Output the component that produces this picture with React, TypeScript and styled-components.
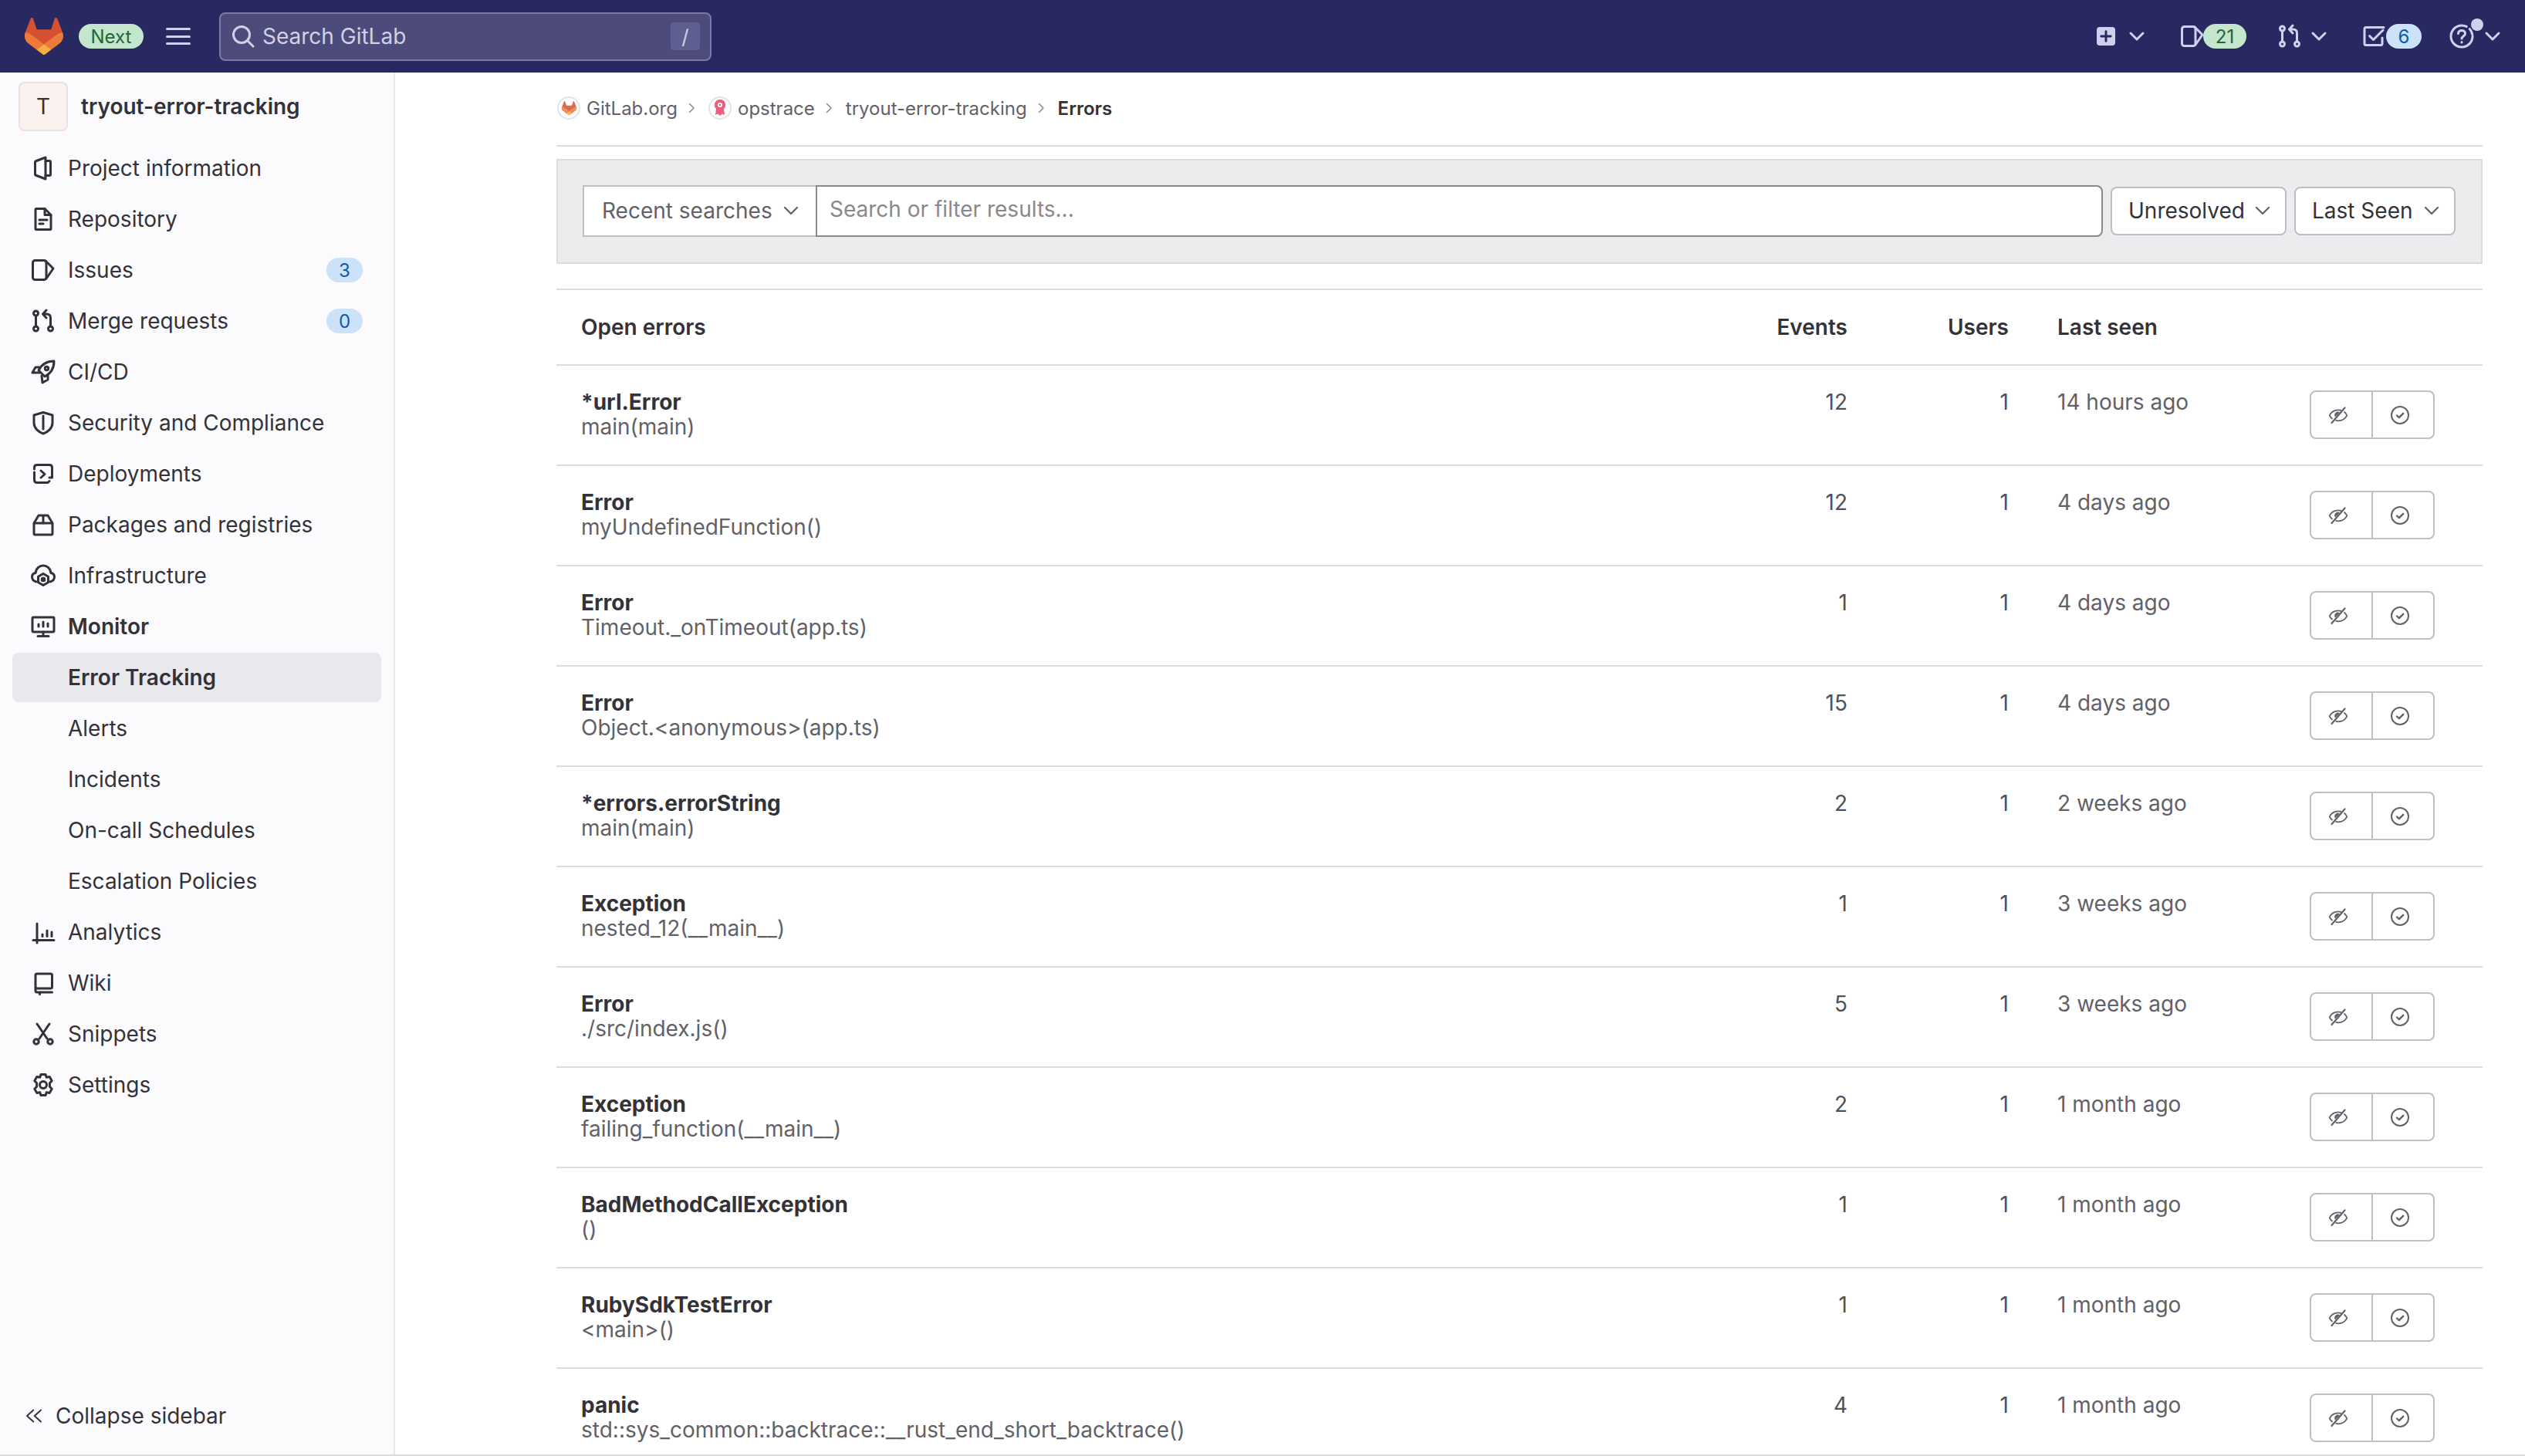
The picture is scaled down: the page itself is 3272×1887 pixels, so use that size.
import React from "react";
import styled, { createGlobalStyle } from "styled-components";

const GlobalStyle = createGlobalStyle`
  html, body {
    margin: 0;
    padding: 0;
    background: #fff;
    font-family: Inter, "Noto Sans", sans-serif;
    color: #333238;
  }
  * { box-sizing: border-box; }
`;

const Glyph = styled.svg.attrs({ viewBox: "0 0 16 16", fill: "none" })<{ $size?: number; $weight?: number }>`
  width: ${({ $size }) => $size ?? 32}px;
  height: ${({ $size }) => $size ?? 32}px;
  flex: none;
  stroke: currentColor;
  stroke-width: ${({ $weight }) => $weight ?? 1.5};
  stroke-linecap: round;
  stroke-linejoin: round;
`;

const icons: Record<string, React.ReactNode> = {
  project: (
    <>
      <path d="M9.5 1 3 3.5q-.25.1-.25.5v8q0 .4.25.5L9.5 15z" />
      <path d="M9.5 3.25H12q.75 0 .75.75v8q0 .75-.75.75H9.5" />
    </>
  ),
  doc: (
    <>
      <path d="M3.5 1.25H9l4 4v9q0 .5-.5.5h-9q-.5 0-.5-.5V1.75q0-.5.5-.5z" />
      <path d="M9 1.25v4h4M5.5 8.5h5M5.5 11H8" />
    </>
  ),
  issues: (
    <>
      <rect x="1.25" y="1.75" width="8.75" height="12.5" rx="1.5" />
      <path d="M9.5 2 14.5 7 10 13.5" />
    </>
  ),
  merge: (
    <>
      <circle cx="3.25" cy="3" r="1.5" />
      <circle cx="3.25" cy="13" r="1.5" />
      <circle cx="12.75" cy="13" r="1.5" />
      <path d="M3.25 4.5v7M12.75 11.5V6q0-2.5-2.5-2.5H8.5M10 1 7.75 3.5 10 6" />
    </>
  ),
  rocket: (
    <>
      <path d="M15 1c-4.5 0-8 2-10 6l4 4c4-2 6-5.500 6-10z" />
      <circle cx="10.25" cy="5.750" r="1.100" />
      <path d="M5.500 5H3L1 8.500h4.500M11 10.500V13l-3.500 2-.5-4.500" />
    </>
  ),
  shield: <path d="M8 1.250 14 3v5c0 3.500-3 6-6 7-3-1-6-3.500-6-7V3zM8 3.500v8.500" />,
  deploy: (
    <>
      <path d="M2.250 5V4q0-1.750 1.750-1.750h8Q13.750 2.250 13.750 4v6.500H12" />
      <path d="M2.250 7v5q0 1.750 1.750 1.750h7l1-1" />
      <path d="M6.500 6 9 8.250 6.500 10.500" />
    </>
  ),
  box: (
    <>
      <rect x="2" y="7" width="12" height="7.500" rx=".75" />
      <path d="M2 7 5 2h6l3 5M8 2v5" />
    </>
  ),
  infra: (
    <>
      <path d="M3.500 12C1.500 11.500.750 10 .750 8.750c0-1.250 1-2.250 2.250-2.500C3.250 3.500 5.500 1.500 8 1.500s4.750 2 5 4.750c1.250.250 2.250 1.250 2.250 2.500 0 1.250-.750 2.750-2.750 3.250" />
      <path d="m8 6.750 3.250 1.900v3.700L8 14.250l-3.250-1.900v-3.700z" />
      <circle cx="8" cy="10.500" r=".9" />
    </>
  ),
  monitor: (
    <>
      <rect x="1" y="2" width="14" height="9.500" rx=".75" />
      <path d="M5 8V6.500M8 8V5M11 8V6M8 11.500v2.500M4.500 14.250h7" />
    </>
  ),
  chart: <path d="M1.500 13.250h13.500M4 2.500V15M7.500 9.500v1.250M10.500 7v3.750M13.500 8v2.750" />,
  book: (
    <>
      <rect x="3" y="2" width="10.750" height="9.500" rx="1" />
      <path d="M3 11v2q0 1 1 1h9.750M5.750 14v1.250" />
    </>
  ),
  scissors: (
    <>
      <path d="M4 1.500 10.500 11M12 1.500 5.500 11" />
      <circle cx="3.500" cy="13" r="1.600" />
      <circle cx="12.500" cy="13" r="1.600" />
    </>
  ),
  gear: (
    <>
      <path d="M6.500 1.250h3l.6 1.900 2-.4 1.500 2.600-1.400 1.500v2.300l1.400 1.500-1.500 2.600-2-.4-.6 1.900h-3l-.6-1.900-2 .4-1.500-2.600 1.400-1.500V6.850L2.400 5.350l1.500-2.600 2 .4z" />
      <circle cx="8" cy="8" r="2.250" />
    </>
  ),
  search: <path d="M11 11l3.500 3.500M7 12.250A5.250 5.250 0 1 0 7 1.750a5.250 5.250 0 0 0 0 10.500z" />,
  todo: (
    <>
      <path d="M14 2.250H2.500q-1 0-1 1v9.500q0 1 1 1h9.500q1 0 1-1V9" />
      <path d="M4.750 7.750 7.250 10.250 13.500 4" />
    </>
  ),
  help: (
    <>
      <circle cx="8" cy="8" r="7" strokeDasharray="36 2.500 4 2" />
      <path d="M5.750 6.250C5.750 3.500 10.250 3.500 10.250 6.250c0 1.750-2.250 1.750-2.250 3.250M8 11.750v.25" />
    </>
  ),
};

const Tanuki = ({ width, muted }: { width: number; muted?: boolean }) => (
  <svg width={width} viewBox="0 0 25 24" style={{ opacity: muted ? 0.85 : 1, flex: "none" }}>
    <path d="m24.507 9.500-.034-.09L21.082.562a.896.896 0 0 0-1.694.091l-2.290 7.010H7.825L5.535.653a.898.898 0 0 0-1.694-.090L.451 9.411.416 9.500a6.297 6.297 0 0 0 2.090 7.278l.012.01.030.022 5.160 3.867 2.560 1.935 1.554 1.176a1.051 1.051 0 0 0 1.268 0l1.555-1.176 2.560-1.935 5.197-3.890.014-.01A6.297 6.297 0 0 0 24.507 9.500Z" fill="#D65032" />
    <path d="m24.507 9.500-.034-.09a11.440 11.440 0 0 0-4.560 2.051l-7.447 5.632 4.742 3.584 5.197-3.890.014-.01A6.297 6.297 0 0 0 24.507 9.500Z" fill="#EE7A3A" />
    <path d="m7.707 20.677 2.560 1.935 1.555 1.176a1.051 1.051 0 0 0 1.268 0l1.555-1.176 2.560-1.935-4.743-3.584-4.755 3.584Z" fill="#F2AE45" />
    <path d="M5.010 11.461a11.430 11.430 0 0 0-4.560-2.050L.416 9.500a6.297 6.297 0 0 0 2.090 7.278l.012.01.030.022 5.160 3.867 4.745-3.584-7.444-5.632Z" fill="#EE7A3A" />
  </svg>
);

const Page = styled.div`
  width: 3272px;
  height: 1887px;
  overflow: hidden;
  display: flex;
  flex-direction: column;
  border-bottom: 2px solid #dcdcde;
`;

/* top bar */
const TopBar = styled.header`
  height: 94px;
  flex: none;
  display: flex;
  align-items: center;
  background: #292961;
  color: #d1d0ee;
  padding: 0 26px 0 32px;
`;

const NextBadge = styled.span`
  margin-left: 20px;
  width: 84px;
  height: 32px;
  border-radius: 16px;
  background: #c3e6cd;
  color: #24663b;
  font-size: 24px;
  display: flex;
  align-items: center;
  justify-content: center;
`;

const Burger = styled.span`
  margin-left: 29px;
  width: 32px;
  height: 22px;
  display: flex;
  flex-direction: column;
  justify-content: space-between;

  i {
    display: block;
    height: 3px;
    border-radius: 2px;
    background: #d1d0ee;
  }
`;

const SearchBox = styled.div`
  margin-left: 37px;
  width: 638px;
  height: 63px;
  border: 2px solid #7b7aa6;
  border-radius: 8px;
  background: #4c4b7b;
  display: flex;
  align-items: center;
  padding: 0 13px;
  color: #d1d0e6;
  font-size: 28px;
  gap: 9px;
`;

const SearchLabel = styled.span`
  flex: 1;
`;

const SlashKey = styled.span`
  width: 38px;
  height: 36px;
  border-radius: 4px;
  background: #5f5e90;
  display: flex;
  align-items: center;
  justify-content: center;
  font-size: 26px;
`;

const TopActions = styled.div`
  margin-left: auto;
  display: flex;
  align-items: center;
`;

const TopItem = styled.div<{ $gap: number }>`
  position: relative;
  margin-left: ${({ $gap }) => $gap}px;
  display: flex;
  align-items: center;
`;

const Caret = styled.span<{ $gap: number }>`
  margin-left: ${({ $gap }) => $gap}px;
  display: flex;
`;

const PlusTile = styled.span`
  width: 24px;
  height: 24px;
  margin: 0 4px;
  border-radius: 4px;
  background: #d1d0ee;
  color: #292961;
  display: flex;
  align-items: center;
  justify-content: center;
`;

const CountPill = styled.span<{ $tone: "green" | "blue"; $width: number; $overlap: number }>`
  width: ${({ $width }) => $width}px;
  height: 32px;
  margin-left: -${({ $overlap }) => $overlap}px;
  position: relative;
  border-radius: 16px;
  font-size: 24px;
  display: flex;
  align-items: center;
  justify-content: center;
  background: ${({ $tone }) => ($tone === "green" ? "#c3e6cd" : "#cbe2f9")};
  color: ${({ $tone }) => ($tone === "green" ? "#24663b" : "#0b5cad")};
`;

const HelpDot = styled.span`
  position: absolute;
  left: 28px;
  top: -7px;
  width: 16px;
  height: 16px;
  border-radius: 50%;
  background: #d1d0ee;
`;

/* layout */
const Body = styled.div`
  flex: 1;
  min-height: 0;
  display: flex;
`;

const Sidebar = styled.aside`
  width: 512px;
  flex: none;
  display: flex;
  flex-direction: column;
  background: #fbfafd;
  border-right: 2px solid #e9e9ec;
  padding: 12px 16px 0;
`;

const ProjectRow = styled.div`
  display: flex;
  align-items: center;
  gap: 17px;
  padding-left: 8px;
  height: 64px;
  font-size: 28px;
  font-weight: 600;
`;

const ProjectTile = styled.span`
  width: 64px;
  height: 64px;
  border: 2px solid #e8e2e0;
  border-radius: 8px;
  background: #fbf2ef;
  font-weight: 400;
  display: flex;
  align-items: center;
  justify-content: center;
`;

const NavList = styled.nav`
  flex: 1;
  display: flex;
  flex-direction: column;
  gap: 2px;
  padding-top: 16px;
  width: 478px;
`;

const NavRow = styled.div<{ $active?: boolean; $strong?: boolean }>`
  height: 64px;
  display: flex;
  align-items: center;
  gap: 16px;
  padding: 0 24px;
  border-radius: 8px;
  font-size: 28px;
  font-weight: ${({ $strong }) => ($strong ? 600 : 400)};
  background: ${({ $active }) => ($active ? "#e9e9ed" : "transparent")};
`;

const NavSpacer = styled.span`
  width: 32px;
  flex: none;
`;

const NavCount = styled.span`
  margin-left: auto;
  width: 47px;
  height: 32px;
  border-radius: 16px;
  background: #cbe2f9;
  color: #0b5cad;
  font-size: 24px;
  display: flex;
  align-items: center;
  justify-content: center;
`;

const Collapse = styled.div`
  height: 96px;
  padding: 0 0 4px 16px;
  display: flex;
  align-items: center;
  gap: 16px;
  font-size: 28px;
`;

const Main = styled.main`
  flex: 1;
  min-width: 0;
  padding: 0 55px 0 209px;
`;

const Crumbs = styled.div`
  height: 96px;
  border-bottom: 2px solid #dcdcde;
  display: flex;
  align-items: center;
  font-size: 24px;
  color: #626168;
  padding: 0 0 2px 1px;
`;

const CrumbAvatar = styled.span`
  width: 30px;
  height: 30px;
  margin-right: 8px;
  border: 2px solid #e3e3e6;
  border-radius: 50%;
  background: #fff;
  display: flex;
  align-items: center;
  justify-content: center;
`;

const CrumbSep = styled.span`
  margin: 0 14px 0 10px;
  color: #89888d;
  display: flex;
`;

const CrumbCurrent = styled.span`
  font-weight: 600;
  color: #333238;
`;

const FilterPanel = styled.section`
  margin-top: 16px;
  height: 136px;
  display: flex;
  align-items: center;
  gap: 10px;
  padding: 0 33px 2px 32px;
  background: #ececef;
  border: 2px solid #dcdcde;
`;

const InputGroup = styled.div`
  flex: 1;
  height: 67px;
  display: flex;
`;

const RecentButton = styled.div`
  width: 304px;
  flex: none;
  display: flex;
  align-items: center;
  justify-content: space-between;
  padding: 0 16px 0 23px;
  background: #fff;
  border: 2px solid #bfbfc3;
  font-size: 28px;
  color: #626168;

  svg {
    color: #626168;
  }
`;

const FilterInput = styled.div`
  flex: 1;
  display: flex;
  align-items: center;
  padding: 0 0 4px 16px;
  margin-left: -2px;
  background: #fff;
  border: 2px solid #89888d;
  border-radius: 0 8px 8px 0;
  font-size: 28px;
  color: #89888d;
`;

const SelectButton = styled.div<{ $width: number }>`
  width: ${({ $width }) => $width}px;
  height: 63px;
  flex: none;
  display: flex;
  align-items: center;
  justify-content: space-between;
  padding: 0 13px 0 21px;
  background: #fff;
  border: 2px solid #bfbfc3;
  border-radius: 8px;
  font-size: 28px;

  svg {
    color: #626168;
  }
`;

const Table = styled.section`
  margin-top: 32px;
  border-top: 2px solid #dcdcde;
`;

const Row = styled.div<{ $head?: boolean }>`
  height: ${({ $head }) => ($head ? 98 : 130)}px;
  display: grid;
  grid-template-columns: 1fr 300px 209px 390px 162px;
  align-items: ${({ $head }) => ($head ? "center" : "start")};
  padding: ${({ $head }) => ($head ? "0 62px 0 32px" : "32px 62px 0 32px")};
  border-bottom: 2px solid #dcdcde;
  font-size: 28px;
  font-weight: ${({ $head }) => ($head ? 600 : 400)};
  line-height: 31px;
`;

const ErrorName = styled.div`
  font-weight: 700;
`;

const ErrorPlace = styled.div`
  color: #626168;
  line-height: 32px;
`;

const Figure = styled.span<{ $plain?: boolean }>`
  text-align: right;
  color: ${({ $plain }) => ($plain ? "#333238" : "#535158")};
`;

const Seen = styled.span<{ $plain?: boolean }>`
  padding-left: 63px;
  color: ${({ $plain }) => ($plain ? "#333238" : "#626168")};
`;

const Actions = styled.div`
  height: 63px;
  display: flex;
  border: 2px solid #bfbfc3;
  border-radius: 8px;
`;

const ActionButton = styled.span`
  flex: 1;
  display: flex;
  align-items: center;
  justify-content: center;
  padding-right: 9px;
  color: #626168;

  & + & {
    border-left: 2px solid #bfbfc3;
  }
`;

const Chevron = ({ weight }: { weight?: number }) => (
  <Glyph $weight={weight}>
    <path d="M4 6l4 4 4-4" />
  </Glyph>
);

const CrumbChevron = () => (
  <Glyph $size={16}>
    <path d="M5.500 2.500 11 8l-5.500 5.500" />
  </Glyph>
);

const Ignore = () => (
  <svg width="26" height="26" viewBox="0 0 26 26" fill="none" stroke="currentColor" strokeWidth="1.800" strokeLinecap="round">
    <path d="M5 17.500C3.500 16.200 2.300 14.600 1.700 13.300 4 8.800 8.500 6.300 13 6.300c1.300 0 2.500.200 3.500.600" />
    <path d="M21 9c1.500 1.200 2.600 2.800 3.300 4.300-2.300 4.500-6.800 7-11.300 7-1 0-2-.100-2.800-.400" />
    <path d="M9 15.500a4.400 4.400 0 0 1 6-6.200z" fill="currentColor" stroke="none" />
    <path d="M21.500 3.500 4.500 23" strokeWidth="2.200" />
  </svg>
);

const Resolve = () => (
  <svg width="24" height="24" viewBox="0 0 24 24" fill="none" stroke="currentColor" strokeWidth="2" strokeLinecap="round" strokeLinejoin="round">
    <circle cx="12" cy="12" r="11" />
    <path d="M8 12.500l2.800 2.700 5.400-5.400" strokeWidth="2.400" />
  </svg>
);

const navItems = [
  { label: "Project information", icon: "project" },
  { label: "Repository", icon: "doc" },
  { label: "Issues", icon: "issues", count: 3 },
  { label: "Merge requests", icon: "merge", count: 0 },
  { label: "CI/CD", icon: "rocket" },
  { label: "Security and Compliance", icon: "shield" },
  { label: "Deployments", icon: "deploy" },
  { label: "Packages and registries", icon: "box" },
  { label: "Infrastructure", icon: "infra" },
  { label: "Monitor", icon: "monitor", strong: true },
  { label: "Error Tracking", active: true, strong: true },
  { label: "Alerts" },
  { label: "Incidents" },
  { label: "On-call Schedules" },
  { label: "Escalation Policies" },
  { label: "Analytics", icon: "chart" },
  { label: "Wiki", icon: "book" },
  { label: "Snippets", icon: "scissors" },
  { label: "Settings", icon: "gear" },
];

const errors = [
  ["*url.Error", "main(main)", 12, "14 hours ago"],
  ["Error", "myUndefinedFunction()", 12, "4 days ago"],
  ["Error", "Timeout._onTimeout(app.ts)", 1, "4 days ago"],
  ["Error", "Object.<anonymous>(app.ts)", 15, "4 days ago"],
  ["*errors.errorString", "main(main)", 2, "2 weeks ago"],
  ["Exception", "nested_12(__main__)", 1, "3 weeks ago"],
  ["Error", "./src/index.js()", 5, "3 weeks ago"],
  ["Exception", "failing_function(__main__)", 2, "1 month ago"],
  ["BadMethodCallException", "()", 1, "1 month ago"],
  ["RubySdkTestError", "<main>()", 1, "1 month ago"],
  ["panic", "std::sys_common::backtrace::__rust_end_short_backtrace()", 4, "1 month ago"],
];

export default function App() {
  return (
    <Page>
      <GlobalStyle />
      <TopBar>
        <Tanuki width={50} />
        <NextBadge>Next</NextBadge>
        <Burger>
          <i />
          <i />
          <i />
        </Burger>
        <SearchBox>
          <Glyph>{icons.search}</Glyph>
          <SearchLabel>Search GitLab</SearchLabel>
          <SlashKey>/</SlashKey>
        </SearchBox>
        <TopActions>
          <TopItem $gap={0}>
            <PlusTile>
              <Glyph $size={18} $weight={2.6}>
                <path d="M8 2.500v11M2.500 8h11" />
              </Glyph>
            </PlusTile>
            <Caret $gap={8}>
              <Chevron />
            </Caret>
          </TopItem>
          <TopItem $gap={40}>
            <Glyph>{icons.issues}</Glyph>
            <CountPill $tone="green" $width={56} $overlap={2}>21</CountPill>
          </TopItem>
          <TopItem $gap={40}>
            <Glyph>{icons.merge}</Glyph>
            <Caret $gap={6}>
              <Chevron />
            </Caret>
          </TopItem>
          <TopItem $gap={40}>
            <Glyph>{icons.todo}</Glyph>
            <CountPill $tone="blue" $width={46} $overlap={1}>6</CountPill>
          </TopItem>
          <TopItem $gap={36}>
            <Glyph>{icons.help}</Glyph>
            <HelpDot />
            <Caret $gap={8}>
              <Chevron />
            </Caret>
          </TopItem>
        </TopActions>
      </TopBar>
      <Body>
        <Sidebar>
          <ProjectRow>
            <ProjectTile>T</ProjectTile>
            tryout-error-tracking
          </ProjectRow>
          <NavList>
            {navItems.map((item) => (
              <NavRow key={item.label} $active={item.active} $strong={item.strong}>
                {item.icon ? <Glyph>{icons[item.icon]}</Glyph> : <NavSpacer />}
                {item.label}
                {item.count !== undefined && <NavCount>{item.count}</NavCount>}
              </NavRow>
            ))}
          </NavList>
          <Collapse>
            <Glyph $size={24} $weight={1.3}>
              <path d="M7.500 3 2 8l5.500 5M14 3 8.500 8l5.500 5" />
            </Glyph>
            Collapse sidebar
          </Collapse>
        </Sidebar>
        <Main>
          <Crumbs>
            <CrumbAvatar>
              <Tanuki width={19} muted />
            </CrumbAvatar>
            GitLab.org
            <CrumbSep>
              <CrumbChevron />
            </CrumbSep>
            <CrumbAvatar>
              <svg width="16" height="22" viewBox="0 0 16 22">
                <path d="M8 0a7 7 0 0 1 5 12l1 8-3-1.500L8 21l-3-2.500L2 20l1-8A7 7 0 0 1 8 0z" fill="#ea5f80" />
                <circle cx="8" cy="7" r="3" fill="#fff" />
                <circle cx="8" cy="7" r="1.300" fill="#ea5f80" />
              </svg>
            </CrumbAvatar>
            opstrace
            <CrumbSep>
              <CrumbChevron />
            </CrumbSep>
            tryout-error-tracking
            <CrumbSep>
              <CrumbChevron />
            </CrumbSep>
            <CrumbCurrent>Errors</CrumbCurrent>
          </Crumbs>
          <FilterPanel>
            <InputGroup>
              <RecentButton>
                Recent searches
                <Chevron weight={1.1} />
              </RecentButton>
              <FilterInput>Search or filter results...</FilterInput>
            </InputGroup>
            <SelectButton $width={228}>
              Unresolved
              <Chevron weight={1.1} />
            </SelectButton>
            <SelectButton $width={209}>
              Last Seen
              <Chevron weight={1.1} />
            </SelectButton>
          </FilterPanel>
          <Table>
            <Row $head>
              <span>Open errors</span>
              <Figure $plain>Events</Figure>
              <Figure $plain>Users</Figure>
              <Seen $plain>Last seen</Seen>
              <span />
            </Row>
            {errors.map(([name, place, events, seen], i) => (
              <Row key={i}>
                <div>
                  <ErrorName>{name}</ErrorName>
                  <ErrorPlace>{place}</ErrorPlace>
                </div>
                <Figure>{events}</Figure>
                <Figure>1</Figure>
                <Seen>{seen}</Seen>
                <Actions>
                  <ActionButton>
                    <Ignore />
                  </ActionButton>
                  <ActionButton>
                    <Resolve />
                  </ActionButton>
                </Actions>
              </Row>
            ))}
          </Table>
        </Main>
      </Body>
    </Page>
  );
}
